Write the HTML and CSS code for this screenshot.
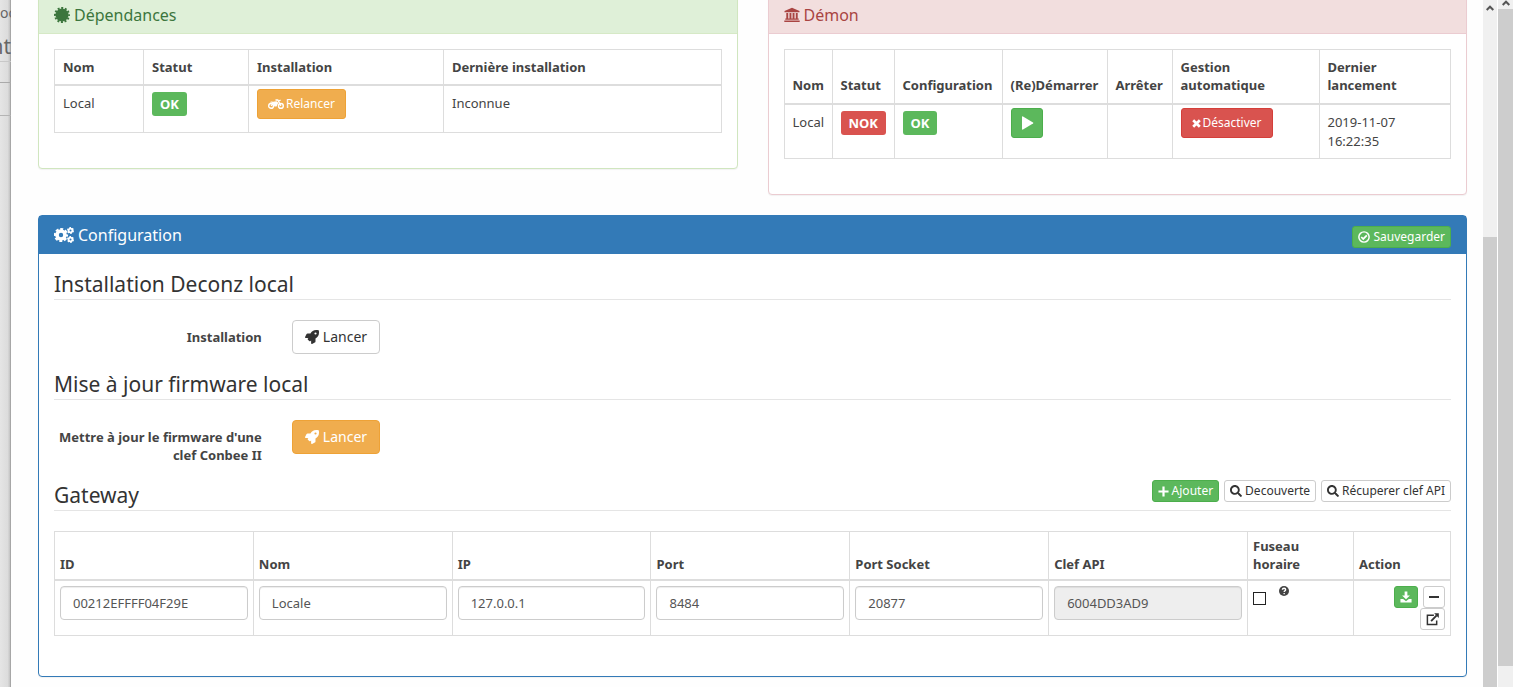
FILE: index.html
```html
<!DOCTYPE html>
<html lang="fr">
<head>
<meta charset="utf-8">
<title>Configuration Deconz</title>
<link rel="stylesheet" href="styles.css">
</head>
<body>
<svg class="sprite" aria-hidden="true">
  <symbol id="rocket" viewBox="0 0 512 512"><path d="M505.1 19.1c-1.2-5.5-6.7-11-12.2-12.2C460.7 0 435.5 0 410.4 0 307.2 0 245.3 55.2 199 128H94.8c-16.3 0-35.5 11.900-42.900 26.500L2.500 253.300A28.400 28.400 0 0 0 0 264a24 24 0 0 0 24 24h103.800l-22.500 22.500c-11.300 11.300-13 32.200 0 45.200l50.900 50.900c11.200 11.200 32.200 13.200 45.300 0l22.500-22.400V488a24 24 0 0 0 24 24 28.600 28.600 0 0 0 10.700-2.500l98.700-49.400c14.600-7.300 26.500-26.500 26.500-42.900V312.800c72.600-46.300 128-108.400 128-211.100.2-25.200.2-50.400-6.800-82.600zM384 168a40 40 0 1 1 40-40 40 40 0 0 1-40 40z"/></symbol>
  <symbol id="search" viewBox="0 0 512 512"><path d="M505 442.700L405.300 343c-4.500-4.500-10.600-7-17-7H372c27.600-35.300 44-79.700 44-128C416 93.100 322.900 0 208 0S0 93.100 0 208s93.100 208 208 208c48.300 0 92.700-16.400 128-44v16.300c0 6.400 2.500 12.500 7 17l99.700 99.700c9.400 9.400 24.600 9.400 33.900 0l28.300-28.300c9.400-9.400 9.400-24.600.1-34zM208 336c-70.700 0-128-57.200-128-128 0-70.700 57.200-128 128-128 70.700 0 128 57.200 128 128 0 70.700-57.200 128-128 128z"/></symbol>
  <symbol id="times" viewBox="0 0 9 9"><path d="M1.200 1.200l6.600 6.600M7.800 1.200L1.200 7.800" fill="none" stroke="currentColor" stroke-width="2.700"/></symbol>
  <symbol id="plus" viewBox="0 0 12 12"><path d="M6 .5v11M.5 6h11" fill="none" stroke="currentColor" stroke-width="2.400"/></symbol>
  <symbol id="minus" viewBox="0 0 10 10"><path d="M0 5h10" fill="none" stroke="currentColor" stroke-width="2"/></symbol>
  <symbol id="play" viewBox="0 0 14 14"><path d="M2 1v12q0 1 1 .6l10-6q.9-.6 0-1.200l-10-6Q2 0 2 1z"/></symbol>
  <symbol id="check" viewBox="0 0 14 14"><circle cx="7" cy="7" r="6" fill="none" stroke="currentColor" stroke-width="1.700"/><path d="M3.800 7l2.300 2.300 4.200-4.300" fill="none" stroke="currentColor" stroke-width="2"/></symbol>
  <symbol id="badge" viewBox="0 0 16 16"><circle cx="8" cy="8" r="6.500"/><circle cx="8" cy="8" r="7" fill="none" stroke="currentColor" stroke-width="2" stroke-dasharray="2 1.665" stroke-dashoffset="1"/></symbol>
  <symbol id="bank" viewBox="0 0 16 16"><path d="M8 .8L.5 4v1.200h15V4zM2.300 6h1.900v5.500H2.300zM5.500 6h1.900v5.500H5.500zM8.600 6h1.900v5.500H8.600zM11.800 6h1.900v5.500h-1.900zM1.300 11.500h13.400v1.300H1.300zM.3 13.500h15.400V15H.3z"/></symbol>
  <symbol id="cogs" viewBox="0 0 20 16"><g fill="none" stroke="currentColor"><circle cx="7" cy="8" r="4" stroke-width="3.600"/><circle cx="7" cy="8" r="6" stroke-width="2.200" stroke-dasharray="2.900 1.810" stroke-dashoffset="1.450"/><circle cx="16.500" cy="3.500" r="1.900" stroke-width="1.800"/><circle cx="16.500" cy="3.500" r="2.900" stroke-width="1.200" stroke-dasharray="1.700 1.337"/><circle cx="16.500" cy="12.500" r="1.900" stroke-width="1.800"/><circle cx="16.500" cy="12.500" r="2.900" stroke-width="1.200" stroke-dasharray="1.700 1.337"/></g></symbol>
  <symbol id="moto" viewBox="0 0 16 12"><g fill="none" stroke="currentColor"><circle cx="3.100" cy="7.900" r="2.400" stroke-width="1.400"/><circle cx="12.900" cy="7.900" r="2.400" stroke-width="1.400"/><path d="M3.100 7.900L5.500 5M7.500 2h2.300l3.100 5.900M10.500 3.300L12.600 2" stroke-width="1.300"/></g><path d="M1.500 4.200q1.800-1.200 3.500-.5l3.500-.5 1.800 1.500L8.600 8.500H6.300q0-2.700-2.300-3.700z"/></symbol>
  <symbol id="download" viewBox="0 0 14 14"><path d="M5.400.5h3.200v4.700h3L7 9.500 2.400 5.200h3zM.5 9.200h3.200L7 12l3.300-2.800h3.200V13.500H.5z"/></symbol>
  <symbol id="external" viewBox="0 0 14 14"><path d="M8.500 2.500h-7v10h10V8" fill="none" stroke="currentColor" stroke-width="1.600"/><path d="M5.500 8.700l6-6.200" fill="none" stroke="currentColor" stroke-width="2"/><path d="M8.800.3h5v5z"/></symbol>
  <symbol id="help" viewBox="0 0 12 12"><circle cx="6" cy="6" r="6"/><path d="M4 4.600q.1-1.900 2.100-1.900 1.900.1 1.900 1.700 0 .9-1 1.400-.8.500-.8 1.300M6.200 8.300v1.700" fill="none" stroke="#fff" stroke-width="1.600"/></symbol>
  <symbol id="up" viewBox="0 0 8 6"><path d="M.7 5L4 1.700 7.300 5" fill="none" stroke="currentColor" stroke-width="2"/></symbol>
</svg>

<div class="screen">
  <aside class="backdrop">
    <p class="backdrop-crumb">oc</p>
    <p class="backdrop-title">nt</p>
    <div class="backdrop-bar"></div>
    <div class="backdrop-row"></div>
  </aside>

  <main class="modal">
    <div class="columns">
      <section class="panel panel-success">
        <header class="panel-heading"><h3 class="panel-title"><svg class="icon-16"><use href="#badge"/></svg> Dépendances</h3></header>
        <div class="panel-body">
          <table class="table">
            <colgroup><col class="w-89"><col class="w-105"><col class="w-195"><col></colgroup>
            <thead><tr><th>Nom</th><th>Statut</th><th>Installation</th><th>Dernière installation</th></tr></thead>
            <tbody><tr>
              <td>Local</td>
              <td class="cell-label"><span class="label success">OK</span></td>
              <td class="cell-btn"><button class="btn btn-sm warning"><svg class="icon-moto"><use href="#moto"/></svg> Relancer</button></td>
              <td>Inconnue</td>
            </tr></tbody>
          </table>
        </div>
      </section>

      <section class="panel panel-danger">
        <header class="panel-heading"><h3 class="panel-title"><svg class="icon-16"><use href="#bank"/></svg> Démon</h3></header>
        <div class="panel-body">
          <table class="table table-daemon">
            <colgroup><col class="w-48"><col class="w-62"><col class="w-108"><col class="w-105"><col class="w-65"><col class="w-147"><col></colgroup>
            <thead><tr><th>Nom</th><th>Statut</th><th>Configuration</th><th>(Re)Démarrer</th><th>Arrêter</th><th>Gestion automatique</th><th>Dernier lancement</th></tr></thead>
            <tbody><tr>
              <td>Local</td>
              <td class="cell-label"><span class="label danger">NOK</span></td>
              <td class="cell-label"><span class="label success">OK</span></td>
              <td class="cell-btn"><button class="btn btn-sm btn-icon success" aria-label="Démarrer"><svg class="icon-14"><use href="#play"/></svg></button></td>
              <td></td>
              <td class="cell-btn"><button class="btn btn-sm danger"><svg class="icon-9"><use href="#times"/></svg> Désactiver</button></td>
              <td>2019-11-07 16:22:35</td>
            </tr></tbody>
          </table>
        </div>
      </section>
    </div>

    <section class="panel panel-primary">
      <header class="panel-heading">
        <h3 class="panel-title"><svg class="icon-cogs"><use href="#cogs"/></svg> Configuration</h3>
        <button class="btn btn-xs success"><svg class="icon-12"><use href="#check"/></svg> Sauvegarder</button>
      </header>
      <div class="panel-body config-body">
        <h2 class="legend">Installation Deconz local</h2>
        <div class="form-row">
          <label class="form-label" for="install">Installation</label>
          <button class="btn default" id="install"><svg class="icon-14"><use href="#rocket"/></svg> Lancer</button>
        </div>
        <h2 class="legend">Mise à jour firmware local</h2>
        <div class="form-row form-row-tall">
          <label class="form-label" for="firmware">Mettre à jour le firmware d'une clef Conbee II</label>
          <button class="btn warning" id="firmware"><svg class="icon-14"><use href="#rocket"/></svg> Lancer</button>
        </div>
        <div class="legend legend-tools">
          <h2 class="legend-text">Gateway</h2>
          <div class="tools">
            <button class="btn btn-xs success"><svg class="icon-11"><use href="#plus"/></svg>Ajouter</button>
            <button class="btn btn-xs default"><svg class="icon-12"><use href="#search"/></svg> Decouverte</button>
            <button class="btn btn-xs default"><svg class="icon-12"><use href="#search"/></svg> Récuperer clef API</button>
          </div>
        </div>
        <table class="table table-condensed">
          <colgroup><col><col><col><col><col><col><col class="w-106"><col class="w-97"></colgroup>
          <thead><tr><th>ID</th><th>Nom</th><th>IP</th><th>Port</th><th>Port Socket</th><th>Clef API</th><th>Fuseau horaire</th><th>Action</th></tr></thead>
          <tbody><tr>
            <td><input class="field" type="text" aria-label="ID" value="00212EFFFF04F29E"></td>
            <td><input class="field" type="text" aria-label="Nom" value="Locale"></td>
            <td><input class="field" type="text" aria-label="IP" value="127.0.0.1"></td>
            <td><input class="field" type="text" aria-label="Port" value="8484"></td>
            <td><input class="field" type="text" aria-label="Port Socket" value="20877"></td>
            <td><input class="field" type="text" aria-label="Clef API" value="6004DD3AD9" disabled></td>
            <td><div class="timezone"><input class="check" type="checkbox" aria-label="Fuseau horaire"><svg class="icon-10"><use href="#help"/></svg></div></td>
            <td>
              <div class="actions">
                <button class="btn btn-xs success" aria-label="Télécharger"><svg class="icon-12"><use href="#download"/></svg></button>
                <button class="btn btn-xs default" aria-label="Supprimer"><svg class="icon-10"><use href="#minus"/></svg></button>
              </div>
              <div class="actions">
                <button class="btn btn-xs default" aria-label="Ouvrir"><svg class="icon-13"><use href="#external"/></svg></button>
              </div>
            </td>
          </tr></tbody>
        </table>
      </div>
    </section>
  </main>

  <div class="scrollbar scrollbar-inner"><svg class="arrow"><use href="#up"/></svg><div class="thumb"></div></div>
  <div class="scrollbar scrollbar-outer"><svg class="arrow"><use href="#up"/></svg><div class="thumb"></div></div>
</div>
</body>
</html>
```
FILE: styles.css
```css
* { box-sizing: border-box; }
body {
  margin: 0;
  background: #fff;
  color: #444;
  font: 13px/19px "Noto Sans", "Open Sans", sans-serif;
}
h2, h3, p { margin: 0; font-weight: 400; }
.sprite { position: absolute; width: 0; height: 0; }
svg { fill: currentColor; flex: none; }
.icon-9 { width: 9px; height: 9px; }
.icon-10 { width: 10px; height: 10px; }
.icon-11 { width: 11px; height: 11px; }
.icon-12 { width: 12px; height: 12px; }
.icon-13 { width: 13px; height: 13px; }
.icon-14 { width: 14px; height: 14px; }
.icon-16 { width: 16px; height: 16px; }
.icon-moto { width: 16px; height: 12px; }
.icon-cogs { width: 20px; height: 16px; }

.screen { display: flex; height: 100vh; overflow: hidden; }

.backdrop {
  flex: none;
  width: 11px;
  overflow: hidden;
  background: linear-gradient(to right, #e5e5e5, #dcdcdc 70%, #c4c4c4 90%, #8e8e8e);
  color: #666;
}
.backdrop-crumb { height: 28px; padding-top: 3px; font-size: 14px; }
.backdrop-title {
  display: flex;
  justify-content: flex-end;
  height: 34px;
  border-bottom: 1px solid #c8c8c8;
  font-size: 21px;
  line-height: 36px;
}
.backdrop-bar { height: 21px; border-bottom: 1px solid #aaa; }
.backdrop-row { height: 33px; border-bottom: 1px solid #b4b4b4; }

.modal { flex: 1; min-width: 0; padding: 0 16px 0 27px; background: #fefefe; }
.columns { display: flex; align-items: flex-start; gap: 30px; margin-top: -5px; }
.columns .panel { flex: 1; min-width: 0; }

.panel {
  margin-bottom: 20px;
  border: 1px solid;
  border-radius: 4px;
  background: #fff;
  box-shadow: 0 1px 1px rgba(0, 0, 0, .05);
}
.panel-heading {
  display: flex;
  justify-content: space-between;
  align-items: flex-start;
  padding: 10px 15px 5px;
  border-bottom: 1px solid;
}
.panel-title {
  display: flex;
  align-items: center;
  gap: 4px;
  margin-bottom: 4px;
  font-size: 16px;
  line-height: 18px;
}
.panel-body { padding: 15px; }
.panel-success { border-color: #d0e6bf; }
.panel-success .panel-heading { background: #dff0d8; border-color: #d6e9c6; color: #3c763d; }
.panel-danger { border-color: #ebccd1; }
.panel-danger .panel-heading { background: #f2dede; border-color: #ebccd1; color: #a94442; }
.panel-primary { border-color: #337ab7; }
.panel-primary .panel-heading { background: #337ab7; border-color: #337ab7; color: #fff; }

.table {
  width: 100%;
  margin-bottom: 20px;
  table-layout: fixed;
  border-collapse: collapse;
}
.table th, .table td { border: 1px solid #ddd; padding: 8px 7px 7px 8px; text-align: left; vertical-align: top; }
.table th { padding-bottom: 8px; border-bottom-width: 2px; line-height: 18px; vertical-align: bottom; }
.table-daemon th { padding-bottom: 9px; }
.table .cell-btn { padding: 3px 8px 13px; }
.table .cell-label { padding-top: 6px; }
.table-condensed td { padding: 5px; }
.table-condensed th { padding: 5px 5px 6px; }
.w-48 { width: 48px; }
.w-62 { width: 62px; }
.w-65 { width: 65px; }
.w-89 { width: 89px; }
.w-97 { width: 97px; }
.w-105 { width: 105px; }
.w-106 { width: 106px; }
.w-108 { width: 108px; }
.w-147 { width: 147px; }
.w-195 { width: 195px; }

.label {
  display: inline-block;
  padding: 0 8px;
  border-radius: 3px;
  color: #fff;
  font-weight: 700;
  line-height: 24px;
  vertical-align: top;
}
.btn {
  display: inline-flex;
  align-items: center;
  justify-content: center;
  gap: 4px;
  height: 34px;
  padding: 0 12px;
  border: 1px solid;
  border-radius: 4px;
  font: 14px/20px "Noto Sans", "Open Sans", sans-serif;
  white-space: nowrap;
  vertical-align: top;
}
.btn-sm { height: 30px; padding: 0 10px; border-radius: 3px; font-size: 12px; line-height: 18px; gap: 2px; }
.btn-icon { padding: 0 8px; }
.btn-xs { height: 22px; padding: 0 5px; border-radius: 3px; font-size: 12px; line-height: 18px; gap: 3px; }
.success { background: #5cb85c; border-color: #4cae4c; color: #fff; }
.warning { background: #f0ad4e; border-color: #eea236; color: #fff; }
.danger { background: #d9534f; border-color: #d43f3a; color: #fff; }
.default { background: #fff; border-color: #ccc; color: #333; }

.config-body { padding-bottom: 20px; }
.legend {
  margin-bottom: 20px;
  border-bottom: 1px solid #e5e5e5;
  color: #333;
  font-size: 21px;
  line-height: 30px;
}
.legend-tools { display: flex; justify-content: space-between; }
.legend-text { font-size: 21px; }
.tools { display: flex; gap: 5px; }
.form-row { display: flex; align-items: flex-start; margin: 0 -15px 15px; }
.form-row-tall { min-height: 45px; }
.form-label {
  width: 16.667%;
  padding: 8px 15px 0;
  font-weight: 700;
  line-height: 18px;
  text-align: right;
}
.form-row .btn { margin-left: 15px; }

.field {
  display: block;
  width: 100%;
  height: 34px;
  padding: 0 12px;
  border: 1px solid #ccc;
  border-radius: 4px;
  background: #fff;
  color: #555;
  font: 13px/19px "Noto Sans", "Open Sans", sans-serif;
  box-shadow: inset 0 1px 1px rgba(0, 0, 0, .075);
}
.field:disabled { background: #eee; }
.timezone { display: flex; align-items: flex-start; gap: 13px; }
.check {
  appearance: none;
  width: 13px;
  height: 13px;
  margin: 6px 0 0;
  border: 1px solid #222;
  background: #fff;
}
.actions { display: flex; justify-content: flex-end; gap: 5px; }

.scrollbar { display: flex; flex-direction: column; align-items: center; flex: none; background: #f0f0f0; color: #555; }
.arrow { width: 8px; height: 6px; }
.thumb { width: 100%; background: #cdcdcd; }
.scrollbar-inner { width: 14px; margin-right: 1px; padding-top: 5px; }
.scrollbar-inner .thumb { flex: 1; margin-top: 226px; }
.scrollbar-outer { width: 15px; margin-right: 3px; padding-bottom: 21px; }
.scrollbar-outer .thumb { flex: 1; margin-top: 3px; }
```
